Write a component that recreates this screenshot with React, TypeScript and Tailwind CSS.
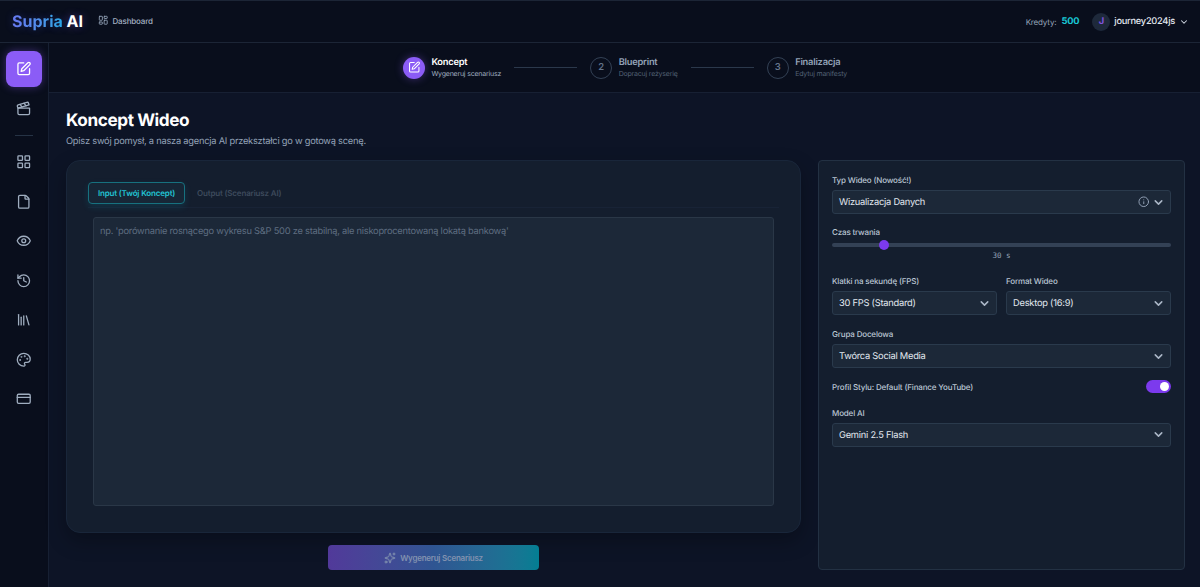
import React from "react";
import { ChevronDown, Clapperboard, CreditCard, Eye, File, History, Info, LayoutDashboard, LayoutGrid, Library, Palette, Sparkles } from "lucide-react";

function EditIcon({ className }: { className?: string }) {
  return (
    <svg className={className} viewBox="0 0 24 24" fill="none" stroke="currentColor" strokeWidth="2" strokeLinecap="round" strokeLinejoin="round">
      <path d="M12 3H5a2 2 0 0 0-2 2v14a2 2 0 0 0 2 2h14a2 2 0 0 0 2-2v-7" />
      <path d="M18.375 2.625a2.121 2.121 0 1 1 3 3L12 15l-4 1 1-4Z" />
    </svg>
  );
}

function NavItem({ icon: Icon }: { icon: React.ElementType }) {
  return (
    <div className="flex h-[35px] w-[35px] items-center justify-center text-[#a0aec0]">
      <Icon className="size-[15.5px]" />
    </div>
  );
}

function Step({ n, title, sub }: { n: number; title: string; sub: string }) {
  const active = n === 1;
  return (
    <div className="flex items-center gap-[6.5px]">
      {active ? (
        <div className="flex size-[22px] items-center justify-center rounded-full bg-[#8b5cf6] text-white shadow-[0_0_9px_rgba(139,92,246,0.4)]">
          <EditIcon className="size-[12.5px]" />
        </div>
      ) : (
        <div className="flex size-[22px] items-center justify-center rounded-full border border-[#334155] pt-[1px] text-[9.4px] font-semibold text-[#64748b]">{n}</div>
      )}
      <div className="whitespace-nowrap">
        <div className={active ? "text-[9.3px] leading-[12px] font-semibold tracking-[-0.024em] text-white" : "text-[9.3px] leading-[12px] font-semibold tracking-[-0.024em] text-[#94a3b8]"}>{title}</div>
        <div className={active ? "text-[7px] leading-[10px] tracking-[-0.028em] text-[#a0aec0]" : "text-[7px] leading-[10px] tracking-[-0.028em] text-[#536174]"}>{sub}</div>
      </div>
    </div>
  );
}

function Label({ children }: { children: React.ReactNode }) {
  return <div className="text-[8px] leading-[12px] font-medium tracking-[-0.02em] text-[#bac5d3]">{children}</div>;
}

function Select({ value, info }: { value: string; info?: boolean }) {
  return (
    <div className="mt-[4px] flex h-[24px] items-center rounded-[3px] border border-[#2a3a4c] bg-[#1c2838] pr-[5px] pl-[6px] text-[9.3px] tracking-[-0.026em] text-[#e2e8f0]">
      <span className="flex-1 pt-[2px]">{value}</span>
      {info && <Info className="mr-[3px] size-[11.5px] text-[#94a3b8]" />}
      <ChevronDown className="size-[13px] text-[#aab6c6]" strokeWidth={2.8} />
    </div>
  );
}

export default function App() {
  return (
    <div className="flex h-[587px] w-[1200px] flex-col overflow-hidden bg-[#0d1426] font-['Inter',sans-serif] [text-rendering:geometricPrecision]">
      <header className="flex h-[43px] shrink-0 items-center justify-between border-t border-b border-[#1c2536] bg-[#090e1c] pr-[11px] pl-[12px]">
        <div className="flex items-center pb-[2px]">
          <div className="w-[71px] text-[16px] leading-[20px] font-bold whitespace-nowrap text-white [text-shadow:0_0_9px_rgba(139,92,246,0.45)]">
            <span className="bg-linear-to-r from-[#6b7cf2] to-[#22b0e6] bg-clip-text text-transparent [text-shadow:0_0_9px_rgba(80,92,246,0.3)]">Supria</span> AI
          </div>
          <LayoutDashboard className="ml-[15px] size-[10.5px] text-[#94a3b8]" />
          <span className="ml-[4px] text-[8px] font-medium tracking-[-0.02em] text-[#a5b1c2]">Dashboard</span>
        </div>
        <div className="flex items-center">
          <span className="text-[8px] tracking-[-0.02em] text-[#94a3b8]">Kredyty:</span>
          <span className="ml-[5px] text-[9.3px] font-bold tracking-[-0.02em] text-[#18c8d5]">500</span>
          <div className="ml-[13px] flex size-[18px] items-center justify-center rounded-full bg-[#1e293b] text-[9.3px] font-bold text-[#8054e0]">J</div>
          <span className="ml-[4px] text-[9.3px] font-medium tracking-[-0.03em] text-[#e2e8f0]">journey2024js</span>
          <ChevronDown className="ml-[4px] size-[10px] text-[#d5dce6]" strokeWidth={2.5} />
        </div>
      </header>
      <div className="flex min-h-0 flex-1">
        <aside className="flex w-[49px] shrink-0 flex-col items-center border-r border-[#172033] bg-[#090e1c] pt-[8px]">
          <div className="flex size-[36px] items-center justify-center rounded-[8px] bg-[#8b5cf6] text-white shadow-[0_0_9px_rgba(139,92,246,0.4)]">
            <EditIcon className="size-[15.5px]" />
          </div>
          <div className="mt-[4px]"><NavItem icon={Clapperboard} /></div>
          <div className="mt-[8.5px] mb-[9px] h-px w-[18px] bg-[#263345]" />
          <div className="flex flex-col gap-[4.5px]">
            <NavItem icon={LayoutGrid} />
            <NavItem icon={File} />
            <NavItem icon={Eye} />
            <NavItem icon={History} />
            <NavItem icon={Library} />
            <NavItem icon={Palette} />
            <NavItem icon={CreditCard} />
          </div>
        </aside>
        <div className="flex min-w-0 flex-1 flex-col">
          <div className="flex h-[50px] shrink-0 items-center justify-center border-b border-[#172033] bg-[#090e1c] pl-[1px]">
            <Step n={1} title="Koncept" sub="Wygeneruj scenariusz" />
            <div className="mx-[13px] h-[1.3px] w-[63px] bg-[#2b384b]" />
            <Step n={2} title="Blueprint" sub="Dopracuj reżyserię" />
            <div className="mx-[13px] h-[1.3px] w-[63px] bg-[#2b384b]" />
            <Step n={3} title="Finalizacja" sub="Edytuj manifesty" />
          </div>
          <main className="flex min-h-0 flex-1 flex-col pt-[17px] pr-[15px] pb-[17px] pl-[17px]">
            <h1 className="text-[17.2px] leading-[22px] font-bold tracking-[-0.024em] text-white">Koncept Wideo</h1>
            <p className="mt-[3px] text-[9.3px] leading-[13px] tracking-[-0.026em] text-[#94a3b8]">Opisz swój pomysł, a nasza agencja AI przekształci go w gotową scenę.</p>
            <div className="mt-[12px] flex min-h-0 flex-1 gap-[17px]">
              <div className="flex w-[735px] shrink-0 flex-col items-center">
                <section className="flex h-[373px] w-full shrink-0 flex-col rounded-[14px] border border-[#19263a] bg-[#141e2e] px-[21px] pt-[21px] pb-[26px] shadow-[0_8px_20px_rgba(0,0,0,0.28)]">
                  <div className="flex h-[26px] w-[691px] items-start border-b border-[#182336] text-[8px] tracking-[-0.02em]">
                    <div className="flex h-[22px] w-[97px] items-center justify-center rounded-[4px] border border-[#17717f] bg-[#172636] font-semibold text-[#22c3d3] shadow-[0_3px_7px_rgba(6,182,212,0.14)]">Input (Twój Koncept)</div>
                    <div className="ml-[12px] flex h-[22px] items-center font-semibold text-[#3d4a5c]">Output (Scenariusz AI)</div>
                  </div>
                  <textarea className="mt-[9px] ml-[5px] block w-[681px] flex-1 resize-none rounded-[3px] border border-[#2a3747] bg-[#1c2838] px-[6px] py-[7px] text-[9.3px] leading-[13px] tracking-[-0.026em] [text-rendering:geometricPrecision] placeholder:text-[#5f6e81]" placeholder="np. 'porównanie rosnącego wykresu S&P 500 ze stabilną, ale niskoprocentowaną lokatą bankową'" />
                </section>
                <button className="mt-[12px] flex h-[25px] w-[211px] items-center justify-center gap-[4px] rounded-[4px] bg-linear-to-r from-[#51399a] via-[#2f5592] to-[#037e93] text-[8px] font-semibold tracking-[-0.03em] text-[#8292b0]"><Sparkles className="size-[12px]" />Wygeneruj Scenariusz</button>
              </div>
              <section className="w-[367px] shrink-0 rounded-[4px] border border-[#233143] bg-[#141e2e] px-[13px] pt-[13px]">
                <Label>Typ Wideo (Nowość!)</Label>
                <Select value="Wizualizacja Danych" info />
                <div className="mt-[12px]"><Label>Czas trwania</Label></div>
                <div className="relative mt-[5px] h-[4px] rounded-full bg-[#334155]"><div className="absolute top-[-3px] left-[47px] size-[10px] rounded-full bg-[#7c3aed]" /></div>
                <div className="mt-[3px] text-center font-['DejaVu_Sans_Mono',monospace] text-[7.55px] leading-[12px] text-[#94a3b8]">30 s</div>
                <div className="mt-[13px] grid grid-cols-2 gap-[9px]">
                  <div><Label>Klatki na sekundę (FPS)</Label><Select value="30 FPS (Standard)" /></div>
                  <div><Label>Format Wideo</Label><Select value="Desktop (16:9)" /></div>
                </div>
                <div className="mt-[13px]"><Label>Grupa Docelowa</Label></div>
                <Select value="Twórca Social Media" />
                <div className="mt-[12px] flex h-[13px] items-center justify-between">
                  <Label>Profil Stylu: Default (Finance YouTube)</Label>
                  <div className="flex h-[13px] w-[25px] items-center justify-end rounded-full bg-[#7c3aed] pr-[2px]"><div className="size-[9px] rounded-full bg-white" /></div>
                </div>
                <div className="mt-[13.5px]"><Label>Model AI</Label></div>
                <Select value="Gemini 2.5 Flash" />
              </section>
            </div>
          </main>
        </div>
      </div>
    </div>
  );
}
